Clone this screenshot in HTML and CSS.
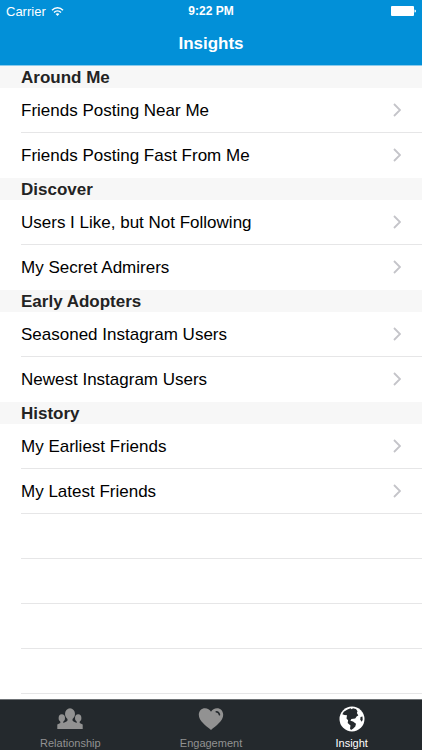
FILE: index.html
```html
<!DOCTYPE html>
<html lang="en">
<head>
  <meta charset="UTF-8">
  <meta name="viewport" content="width=device-width, initial-scale=1.0">
  <title>Insights</title>
  <link rel="stylesheet" href="styles.css">
</head>
<body>
  <svg class="sprite" aria-hidden="true">
    <symbol id="chevron" viewBox="0 0 8 14">
      <path d="M1 1l6 6-6 6" fill="none" stroke="#c4c4c9" stroke-width="1.800"/>
    </symbol>
  </svg>

  <header class="header">
    <div class="status-bar">
      <div class="carrier">
        <span>Carrier</span>
        <svg class="wifi" viewBox="0 0 13 9" aria-hidden="true">
          <path d="M1 3.2C4.2 0 8.8 0 12 3.2M3 5.5c2-2 5-2 7 0" fill="none" stroke="#fff" stroke-width="1.5"/>
          <path d="M4.6 7.1c1.1-1 2.7-1 3.8 0L6.5 9z" fill="#fff"/>
        </svg>
      </div>
      <span class="time">9:22 PM</span>
      <svg class="battery" viewBox="0 0 25 10" aria-hidden="true">
        <rect width="23" height="10" rx="1" fill="#fff"/>
        <path d="M23.500 3.500q1.500 0 1.500 1.500t-1.500 1.500z" fill="#fff"/>
      </svg>
    </div>
    <h1>Insights</h1>
  </header>

  <main class="list">
    <section>
      <h2>Around Me</h2>
      <ul>
        <li><a href="#">Friends Posting Near Me <svg class="chevron"><use href="#chevron"/></svg></a></li>
        <li><a href="#">Friends Posting Fast From Me <svg class="chevron"><use href="#chevron"/></svg></a></li>
      </ul>
    </section>
    <section>
      <h2>Discover</h2>
      <ul>
        <li><a href="#">Users I Like, but Not Following <svg class="chevron"><use href="#chevron"/></svg></a></li>
        <li><a href="#">My Secret Admirers <svg class="chevron"><use href="#chevron"/></svg></a></li>
      </ul>
    </section>
    <section>
      <h2>Early Adopters</h2>
      <ul>
        <li><a href="#">Seasoned Instagram Users <svg class="chevron"><use href="#chevron"/></svg></a></li>
        <li><a href="#">Newest Instagram Users <svg class="chevron"><use href="#chevron"/></svg></a></li>
      </ul>
    </section>
    <section>
      <h2>History</h2>
      <ul>
        <li><a href="#">My Earliest Friends <svg class="chevron"><use href="#chevron"/></svg></a></li>
        <li><a href="#">My Latest Friends <svg class="chevron"><use href="#chevron"/></svg></a></li>
      </ul>
    </section>
    <div class="empty-rows"></div>
  </main>

  <nav class="tab-bar">
    <a class="tab" href="#">
      <svg viewBox="0 0 26 26" aria-hidden="true">
        <g fill="currentColor">
          <ellipse cx="4.800" cy="12" rx="3.200" ry="3.800"/>
          <ellipse cx="21.200" cy="12" rx="3.200" ry="3.800"/>
          <ellipse cx="13" cy="8" rx="5" ry="5.800"/>
          <path d="M3.300 14h3v3l3.200-1.500 1-1V12h5v2.500l1 1 3.200 1.500v-3h3v3l3 1.500v4.500H.3v-4.500l3-1.500z"/>
        </g>
      </svg>
      <span>Relationship</span>
    </a>
    <a class="tab" href="#">
      <svg viewBox="0 0 26 26" aria-hidden="true">
        <path d="M13 24C8 19.800.8 15 .8 8.800.8 5 3.500 2.300 7 2.300c2.600 0 4.700 1.200 6 3.500 1.300-2.300 3.400-3.500 6-3.500 3.500 0 6.200 2.700 6.200 6.500C25.200 15 18 19.800 13 24z" fill="currentColor"/>
        <path d="M18.200 5.800c1.800.2 3 1.300 3.300 3" fill="none" stroke="#24292d" stroke-width="1.500" stroke-linecap="round"/>
      </svg>
      <span>Engagement</span>
    </a>
    <a class="tab active" href="#">
      <svg viewBox="0 0 26 26" aria-hidden="true">
        <circle cx="13" cy="13" r="12.500" fill="currentColor"/>
        <path d="M8.500 3.500L11.500 2.300l1.200 1L14 2.200l3 .8 1.500 2.200-.6 1.800 1.400 2.500-1.500.8-1.600 2.200-3.800.5-1 1.800 2.600.7 3 2.300-.7 2.700-2.300 2.200-2 1.300-1-1.500.5-3-2.800-2.600.4-2.700L7.500 12.500l.5-3.200-2.500-.3-2.200-.7 1.500-2.500z" fill="#24292d"/>
        <path d="M21.500 11l2-.5.200 3.500-1.200 1.800-1.200-2.300z" fill="#24292d"/>
      </svg>
      <span>Insight</span>
    </a>
  </nav>
</body>
</html>
```

FILE: styles.css
```css
* {
  box-sizing: border-box;
}

body {
  margin: 0;
  height: 100vh;
  display: flex;
  flex-direction: column;
  background-color: #ffffff;
  color: #000000;
  font-family: "Liberation Sans", Arial, sans-serif;
}

.sprite {
  position: absolute;
  width: 0;
  height: 0;
}

a {
  color: inherit;
  text-decoration: none;
}

.header {
  flex: none;
  background-color: #0290d8;
  border-bottom: 1px solid #8bcbec;
  color: #ffffff;
}

.status-bar {
  display: grid;
  grid-template-columns: 1fr auto 1fr;
  align-items: center;
  height: 22px;
  padding: 0 6px;
}

.carrier {
  display: flex;
  align-items: center;
  gap: 5px;
  font-size: 13px;
}

.wifi {
  width: 13px;
  height: 9px;
}

.time {
  font-size: 12px;
  font-weight: bold;
}

.battery {
  width: 25px;
  height: 10px;
  justify-self: end;
}

h1 {
  margin: 0;
  font-size: 17px;
  line-height: 43px;
  text-align: center;
}

.list {
  flex: 1;
  min-height: 0;
  display: flex;
  flex-direction: column;
  overflow: hidden;
}

section {
  flex: none;
}

h2 {
  margin: 0;
  padding: 2px 0 0 21px;
  background-color: #f7f7f7;
  color: #232323;
  font-size: 17px;
  line-height: 20px;
}

ul {
  margin: 0;
  padding: 0;
  list-style: none;
}

li {
  padding-left: 21px;
}

li a {
  display: flex;
  align-items: center;
  justify-content: space-between;
  height: 45px;
  padding: 2px 21px 0 0;
  border-bottom: 1px solid #e6e6e7;
  font-size: 17px;
}

li:last-child a {
  border-bottom-color: transparent;
}

section:nth-of-type(4) li:last-child a {
  border-bottom-color: #e6e6e7;
}

.chevron {
  width: 8px;
  height: 14px;
  margin-bottom: 2px;
}

.empty-rows {
  flex: 1;
  margin-left: 21px;
  background: repeating-linear-gradient(#ffffff 0 44px, #e6e6e7 44px 45px);
}

.tab-bar {
  flex: none;
  display: flex;
  height: 51px;
  border-top: 1px solid #6f7376;
  background-color: #24292d;
}

.tab {
  flex: 1;
  display: flex;
  flex-direction: column;
  align-items: center;
  padding-top: 6px;
  color: #929292;
  font-size: 11px;
  line-height: 14px;
}

.tab svg {
  width: 26px;
  height: 26px;
  margin-bottom: 4px;
}

.tab.active {
  color: #ffffff;
}
```
